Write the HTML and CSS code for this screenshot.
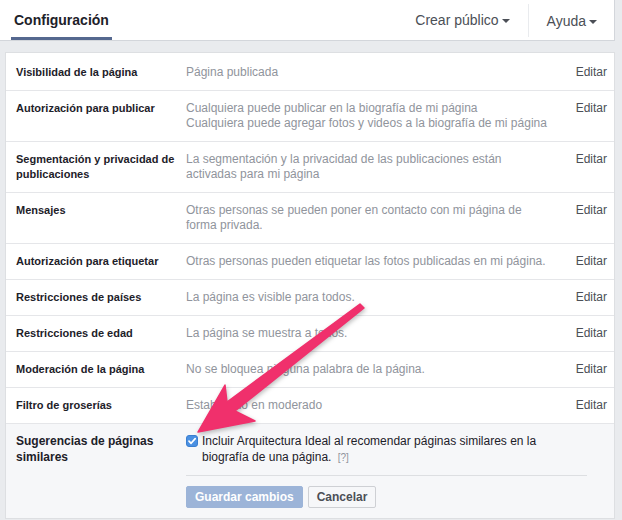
FILE: index.html
```html
<!DOCTYPE html>
<html lang="es">
<head>
    <meta charset="UTF-8">
    <title>Configuración de la página</title>
    <link rel="stylesheet" href="styles.css">
</head>
<body>
    <div class="header">
        <div class="tab">Configuración</div>
        <div class="header-links">
            <div class="header-link">Crear público <span class="caret"></span></div>
            <div class="header-link divided">Ayuda <span class="caret"></span></div>
        </div>
    </div>

    <div class="panel">
        <div class="row">
            <div class="label">Visibilidad de la página</div>
            <div class="value">Página publicada</div>
            <div class="edit">Editar</div>
        </div>
        <div class="row">
            <div class="label">Autorización para publicar</div>
            <div class="value">Cualquiera puede publicar en la biografía de mi página<br>Cualquiera puede agregar fotos y videos a la biografía de mi página</div>
            <div class="edit">Editar</div>
        </div>
        <div class="row">
            <div class="label">Segmentación y privacidad de publicaciones</div>
            <div class="value">La segmentación y la privacidad de las publicaciones están<br>activadas para mi página</div>
            <div class="edit">Editar</div>
        </div>
        <div class="row">
            <div class="label">Mensajes</div>
            <div class="value">Otras personas se pueden poner en contacto con mi página de<br>forma privada.</div>
            <div class="edit">Editar</div>
        </div>
        <div class="row">
            <div class="label">Autorización para etiquetar</div>
            <div class="value">Otras personas pueden etiquetar las fotos publicadas en mi página.</div>
            <div class="edit">Editar</div>
        </div>
        <div class="row">
            <div class="label">Restricciones de países</div>
            <div class="value">La página es visible para todos.</div>
            <div class="edit">Editar</div>
        </div>
        <div class="row">
            <div class="label">Restricciones de edad</div>
            <div class="value">La página se muestra a todos.</div>
            <div class="edit">Editar</div>
        </div>
        <div class="row">
            <div class="label">Moderación de la página</div>
            <div class="value">No se bloquea ninguna palabra de la página.</div>
            <div class="edit">Editar</div>
        </div>
        <div class="row">
            <div class="label">Filtro de groserías</div>
            <div class="value">Establecido en moderado</div>
            <div class="edit">Editar</div>
        </div>

        <!-- row being edited -->
        <div class="row editing">
            <div class="label">Sugerencias de páginas similares</div>
            <div class="edit-form">
                <label class="check-line">
                    <span class="checkbox">
                        <svg width="10" height="10" viewBox="0 0 10 10"><path d="M2 5.2 L4.1 7.3 L8.2 2.6" fill="none" stroke="#fff" stroke-width="1.7" stroke-linecap="round" stroke-linejoin="round"/></svg>
                    </span>
                    <span>Incluir Arquitectura Ideal al recomendar páginas similares en la<br>biografía de una página. <span class="help">[?]</span></span>
                </label>
                <div class="form-buttons">
                    <button class="btn btn-save" disabled>Guardar cambios</button>
                    <button class="btn btn-cancel">Cancelar</button>
                </div>
            </div>
        </div>
    </div>

    <!-- annotation arrow drawn over the screenshot -->
    <svg class="arrow" width="622" height="520" viewBox="0 0 622 520">
        <polygon points="198,432 255,421 235,411 364,308 360,304 227,402 225,385" fill="#f0306c" stroke="#f0306c" stroke-width="1.5" stroke-linejoin="round"/>
    </svg>
</body>
</html>
```

FILE: styles.css
```css
* {
    box-sizing: border-box;
    margin: 0;
    padding: 0;
}

body {
    font-family: "Liberation Sans", Arial, Helvetica, sans-serif;
    font-size: 12px;
    background-color: #e9ebee;
    color: #1d2129;
    width: 622px;
    height: 520px;
    overflow: hidden;
    position: relative;
}

.header {
    width: 615px;
    height: 41px;
    background-color: #fff;
    border-bottom: 1px solid #d3d6db;
    border-right: 1px solid #d3d6db;
    display: flex;
    justify-content: space-between;
    align-items: stretch;
}

.tab {
    margin-left: 11px;
    padding: 3px 3px 0;
    font-size: 14px;
    font-weight: bold;
    display: flex;
    align-items: center;
    border-bottom: 3px solid #55688f;
}

.header-links {
    display: flex;
    align-items: stretch;
}

.header-link {
    font-size: 14px;
    color: #4b4f56;
    padding: 0 18px 0 18px;
    display: flex;
    align-items: center;
    gap: 3px;
}

.header-link.divided {
    border-left: 1px solid #e9ebee;
    margin: 4px 0 3px;
    padding-right: 17px;
}

.caret {
    width: 0;
    height: 0;
    border-left: 4px solid transparent;
    border-right: 4px solid transparent;
    border-top: 4px solid #4b4f56;
    margin-top: 2px;
}

.panel {
    margin: 11px 7px 0 5px;
    padding-top: 2px;
    background-color: #fff;
    border: 1px solid #dddfe2;
    width: 610px;
}

.row {
    display: grid;
    grid-template-columns: 170px 1fr auto;
    padding: 10px 7px 10px 10px;
    line-height: 15px;
    border-bottom: 1px solid #e5e6e9;
}

.label {
    font-size: 11px;
    font-weight: bold;
    color: #1d2129;
    padding-right: 4px;
}

.value {
    color: #90949c;
}

.edit {
    color: #4b4f56;
}

.row.editing {
    background-color: #f6f7f9;
    border-bottom: none;
    line-height: 16px;
    padding-top: 9px;
}

.row.editing .label {
    font-size: 12px;
    padding-right: 8px;
}

.edit-form {
    grid-column: 2 / 4;
    margin-right: 20px;
}

.check-line {
    display: flex;
    gap: 4px;
    color: #1d2129;
    padding-bottom: 9px;
    border-bottom: 1px solid #dddfe2;
}

.checkbox {
    width: 12px;
    height: 12px;
    margin-top: 2px;
    border-radius: 3px;
    background-color: #4a90e2;
    border: 1px solid #3b7fd0;
    flex-shrink: 0;
    display: flex;
    align-items: center;
    justify-content: center;
}

.checkbox svg {
    display: block;
}

.help {
    color: #90949c;
    font-size: 10px;
    margin-left: 3px;
}

.form-buttons {
    display: flex;
    gap: 5px;
    margin-top: 10px;
}

.btn {
    font-family: inherit;
    font-size: 12px;
    font-weight: bold;
    height: 22px;
    padding: 0 8px;
    border-radius: 2px;
    white-space: nowrap;
}

.btn-save {
    background-color: #9cb4d8;
    border: 1px solid #9cb4d8;
    color: #fff;
}

.btn-cancel {
    background-color: #f6f7f9;
    border: 1px solid #ced0d4;
    color: #4b4f56;
}

.arrow {
    position: absolute;
    top: 0;
    left: 0;
    pointer-events: none;
    filter: drop-shadow(1px 2px 2px rgba(0, 0, 0, 0.25));
}
```
